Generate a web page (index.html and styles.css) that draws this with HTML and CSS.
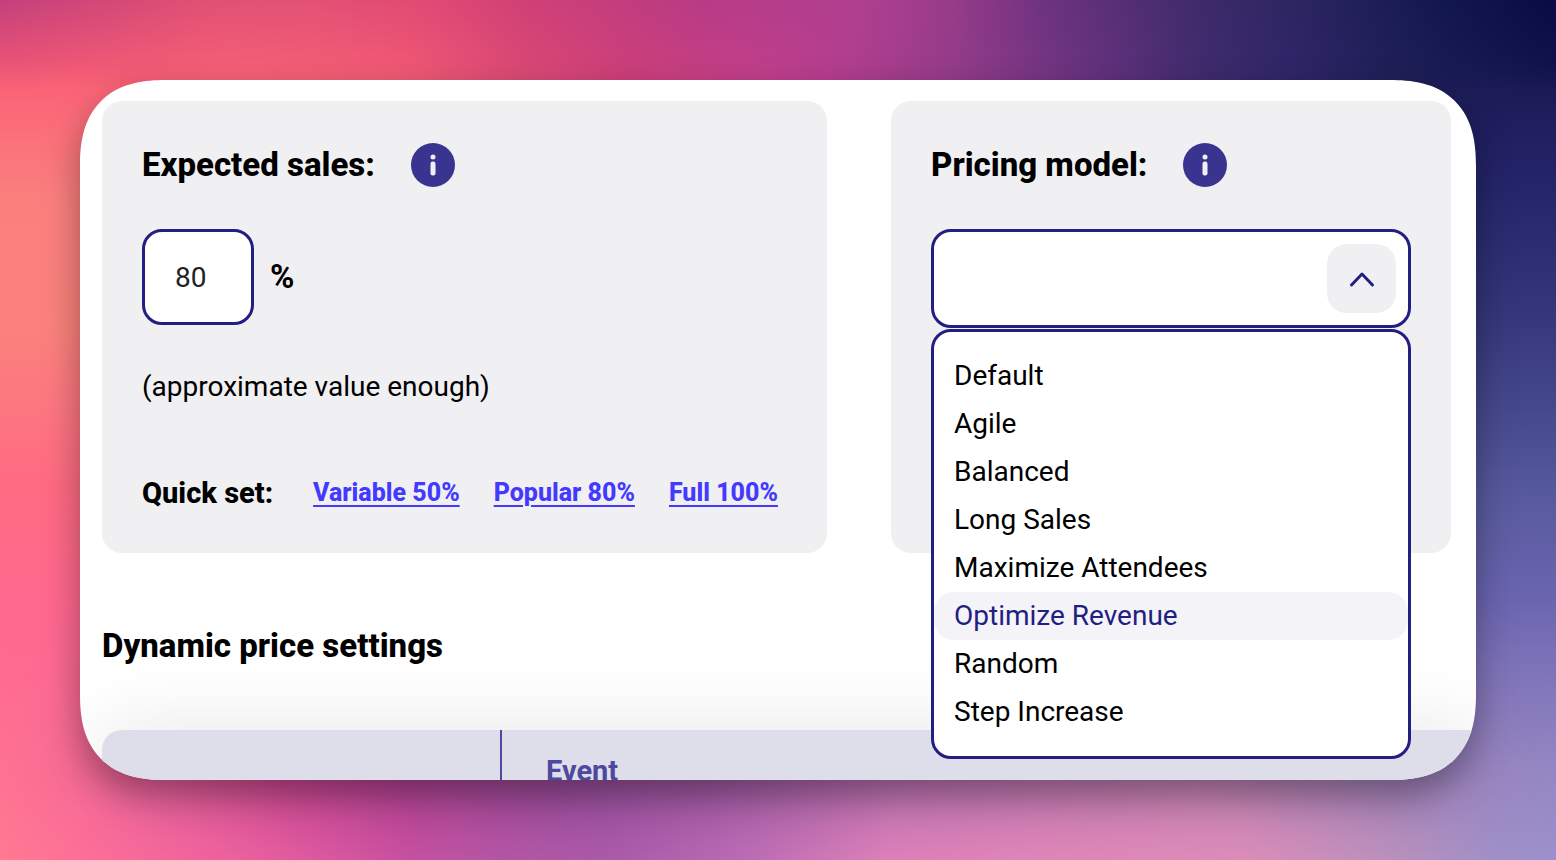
FILE: index.html
```html
<!DOCTYPE html>
<html lang="en">
<head>
<meta charset="utf-8">
<meta name="viewport" content="width=device-width, initial-scale=1">
<title>Dynamic price settings</title>
<link rel="stylesheet" href="styles.css">
</head>
<body>
<main class="window">
  <div class="cards">
    <section class="card">
      <div class="card-head">
        <h2 class="title"><label for="sales">Expected sales:</label></h2>
        <button class="info" type="button" aria-label="About expected sales">
          <svg viewBox="0 0 44 44" aria-hidden="true"><circle cx="22" cy="14" r="2.5"/><rect x="19.5" y="18.5" width="5" height="14" rx="2.2"/></svg>
        </button>
      </div>
      <div class="amount">
        <input class="amount-input" id="sales" type="text" inputmode="numeric" value="80">
        <span class="unit">%</span>
      </div>
      <p class="hint">(approximate value enough)</p>
      <div class="quick">
        <span class="quick-label">Quick set:</span>
        <nav class="quick-links" aria-label="Quick set">
          <a href="#">Variable 50%</a>
          <a href="#">Popular 80%</a>
          <a href="#">Full 100%</a>
        </nav>
      </div>
    </section>
    <section class="card">
      <div class="card-head">
        <h2 class="title" id="model-label">Pricing model:</h2>
        <button class="info" type="button" aria-label="About pricing model">
          <svg viewBox="0 0 44 44" aria-hidden="true"><circle cx="22" cy="14" r="2.5"/><rect x="19.5" y="18.5" width="5" height="14" rx="2.2"/></svg>
        </button>
      </div>
      <div class="combo">
        <button class="combo-field" type="button" aria-haspopup="listbox" aria-expanded="true" aria-labelledby="model-label">
          <span class="combo-toggle">
            <svg viewBox="0 0 32 32" aria-hidden="true"><path d="M5.500 22 16 11 26.500 22"/></svg>
          </span>
        </button>
        <ul class="menu" role="listbox" aria-labelledby="model-label">
          <li class="option" role="option">Default</li>
          <li class="option" role="option">Agile</li>
          <li class="option" role="option">Balanced</li>
          <li class="option" role="option">Long Sales</li>
          <li class="option" role="option">Maximize Attendees</li>
          <li class="option active" role="option" aria-selected="true">Optimize Revenue</li>
          <li class="option" role="option">Random</li>
          <li class="option" role="option">Step Increase</li>
        </ul>
      </div>
    </section>
  </div>
  <h2 class="title section-title">Dynamic price settings</h2>
  <table class="prices">
    <thead>
      <tr><td class="corner"></td><th class="event" scope="col">Event</th></tr>
    </thead>
  </table>
</main>
</body>
</html>
```
FILE: styles.css
```css
* {
  box-sizing: border-box;
}

body {
  position: relative;
  margin: 0;
  height: 100vh;
  padding: 80px;
  overflow: hidden;
  font: 28px/48px Roboto, "Liberation Sans", sans-serif;
  color: #000;
  background:
    linear-gradient(#fb647400 7%, #fb6a78 13%, #fa807e 23%, #fb827c 38%, #fd7780 47%, #ff6b82 56%, #ff6890 72%, #ff6f9000 90%) left / 120px 100% no-repeat,
    linear-gradient(#1c1a5800 7%, #1e1d5c 13%, #24246a 21%, #33347a 35%, #45478c 47%, #585a9e 58%, #6b65b0 70%, #7c72b8 77%, #8b80bc00 90%) right / 120px 100% no-repeat,
    linear-gradient(90deg, #f85a74, #fa6476 15%, #f45c74 26%, #e04e74 32%, #cf4078 40%, #c4408a 48%, #b83e90 53%, #953c8a 61%, #62327e 71%, #422c6e 77%, #30266a 83%, #1f2058 90%, #12144c) top / 100% 50% no-repeat,
    linear-gradient(90deg, #ff7292, #f86c94 4%, #e4609a 10%, #c84590 19%, #b04090 26%, #954a98 36%, #9a559f 45%, #b870b0 58%, #c080b0 77%, #a080b8 90%, #9488c4) bottom / 100% 50% no-repeat;
}

body::before,
body::after {
  content: "";
  position: absolute;
  left: 0;
  right: 0;
  height: 88px;
}

body::before {
  top: 0;
  background: linear-gradient(90deg, #c3407c, #e05074 13%, #e25275 19%, #e04a74 27%, #cf4076 34%, #b83b85 45%, #b04090 55%, #983c88 61%, #6e3380 67%, #3f2b6c 77%, #2a2560 84%, #12174e 93%, #0a0c44);
  mask-image: linear-gradient(#000, transparent);
}

body::after {
  bottom: 0;
  background: linear-gradient(90deg, #ff7a92, #fc6e98 6%, #ea609e 16%, #c850a0 26%, #b455a4 32%, #aa5aa8 39%, #bc6cb4 48%, #dc80b8 57%, #e085b8 67%, #dc8cb8 80%, #b890bc 90%, #a090c8 96%, #9c90cc);
  mask-image: linear-gradient(transparent, #000);
}

.window {
  position: relative;
  z-index: 1;
  height: 100%;
  padding: 21px 0 0 22px;
  overflow: hidden;
  background: #fff;
  border-radius: 72px;
  box-shadow: 0 16px 36px rgba(0, 0, 0, 0.36);
}

@supports (corner-shape: superellipse(1.3)) {
  .window {
    border-radius: 86px;
    corner-shape: superellipse(1.3);
  }
}

.cards {
  display: grid;
  grid-template-columns: 725fr 560fr;
  gap: 64px;
  padding-right: 25px;
}

.card {
  height: 452px;
  padding: 40px;
  background: #f0f0f2;
  border-radius: 20px;
}

.card-head {
  display: flex;
  align-items: center;
  gap: 36px;
  height: 48px;
  margin-bottom: 40px;
}

.title {
  margin: 0;
  font-size: 33px;
  font-weight: 800;
}

.info {
  width: 44px;
  height: 44px;
  padding: 0;
  border: 0;
  border-radius: 50%;
  background: #39348f;
}

.info svg {
  display: block;
  fill: #f0f0f2;
}

.amount {
  display: flex;
  align-items: center;
  gap: 16px;
}

.amount-input {
  width: 112px;
  height: 96px;
  padding: 0 30px;
  border: 3px solid #231e82;
  border-radius: 20px;
  background: #fff;
  font: inherit;
  color: #222;
}

.unit {
  font-size: 33px;
  font-weight: 700;
}

.hint {
  margin: 38px 0 58px;
}

.quick {
  display: flex;
  align-items: center;
  gap: 40px;
  white-space: nowrap;
}

.quick-label {
  font-size: 29px;
  font-weight: 800;
}

.quick-links {
  display: flex;
  gap: 34px;
  font-size: 25px;
  font-weight: 800;
}

.quick-links a {
  color: #4339ff;
  text-decoration-thickness: 2px;
  text-underline-offset: 4px;
}

.combo {
  position: relative;
}

.combo-field {
  display: flex;
  align-items: center;
  justify-content: flex-end;
  width: 100%;
  height: 99px;
  padding: 0 12px;
  border: 3px solid #231e82;
  border-radius: 20px;
  background: #fff;
}

.combo-toggle {
  display: grid;
  place-items: center;
  width: 69px;
  height: 69px;
  border-radius: 20px;
  background: #f0f0f2;
}

.combo-toggle svg {
  width: 32px;
  height: 32px;
  fill: none;
  stroke: #231e82;
  stroke-width: 3;
  stroke-linecap: round;
  stroke-linejoin: round;
}

.menu {
  position: absolute;
  z-index: 2;
  top: 100%;
  left: 0;
  right: 0;
  margin: 1px 0 0;
  padding: 20px 0;
  list-style: none;
  border: 3px solid #231e82;
  border-radius: 20px;
  background: #fff;
}

.option {
  padding: 0 20px;
  border-radius: 20px;
}

.option.active {
  background: #f4f3f8;
  color: #231e82;
}

.section-title {
  margin: 69px 0 60px;
}

.prices {
  width: 100%;
  border-spacing: 0;
  border-radius: 20px 0 0 0;
  background: #dedeeb;
  color: #4d48a0;
  box-shadow: 0 0 80px rgba(0, 0, 0, 0.1);
}

.corner {
  width: 400px;
  border-right: 2px solid #4d48a0;
}

.event {
  padding: 17px 44px;
  text-align: left;
  font-size: 29px;
  font-weight: 700;
}
```
